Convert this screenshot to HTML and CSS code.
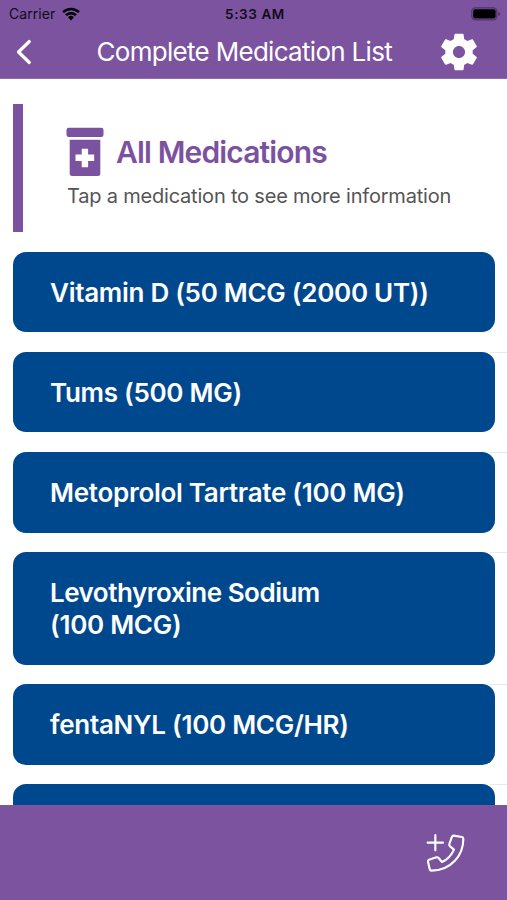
FILE: index.html
```html
<!DOCTYPE html>
<html lang="en">
<head>
<meta charset="utf-8">
<title>Complete Medication List</title>
<link rel="stylesheet" href="styles.css">
</head>
<body>
<div class="app">
  <header class="top">
    <div class="status">
      <div class="carrier"><span>Carrier</span>
        <svg class="wifi" viewBox="0 0 18 14"><path d="M0.2 4.3 A12.6 12.6 0 0 1 17.8 4.3 L16.1 6.1 A10.1 10.1 0 0 0 1.9 6.1Z M3.1 7.3 A8.4 8.4 0 0 1 14.9 7.3 L13.1 9.1 A5.9 5.9 0 0 0 4.9 9.1Z M6 10.3 A4.3 4.3 0 0 1 12 10.3 L9 13.5Z"/></svg>
      </div>
      <span class="time">5:33 AM</span>
      <svg class="battery" viewBox="0 0 30 14"><rect x=".8" y=".8" width="25" height="12" rx="3.6" fill="none" stroke="#4d3466" stroke-width="1.2"/><rect x="2.2" y="2.2" width="22.4" height="9.2" rx="2"/><path d="M27.3 5 Q29.3 5.5 29.3 6.9 Q29.3 8.3 27.3 8.8Z" fill="#4d3466"/></svg>
    </div>
    <div class="nav">
      <svg class="back" viewBox="0 0 16 26"><path d="M13.3 2.5 L2.5 13 L13.3 23.5"/></svg>
      <h1>Complete Medication List</h1>
      <svg class="gear" viewBox="0 0 24 24"><path d="M19.43 12.98c.04-.32.07-.64.07-.98s-.03-.66-.07-.98l2.11-1.65c.19-.15.24-.42.12-.64l-2-3.46c-.12-.22-.39-.3-.61-.22l-2.49 1c-.52-.4-1.08-.73-1.69-.98l-.38-2.65C14.46 2.18 14.25 2 14 2h-4c-.25 0-.46.18-.49.42l-.38 2.65c-.61.25-1.17.59-1.69.98l-2.49-1c-.23-.09-.49 0-.61.22l-2 3.46c-.13.22-.07.49.12.64l2.11 1.65c-.04.32-.07.65-.07.98s.03.66.07.98l-2.11 1.65c-.19.15-.24.42-.12.64l2 3.46c.12.22.39.3.61.22l2.49-1c.52.4 1.08.73 1.69.98l.38 2.65c.03.24.24.42.49.42h4c.25 0 .46-.18.49-.42l.38-2.65c.61-.25 1.17-.59 1.69-.98l2.49 1c.23.09.49 0 .61-.22l2-3.46c.12-.22.07-.49-.12-.64l-2.11-1.65zM12 15.3c-1.82 0-3.3-1.48-3.3-3.3s1.48-3.3 3.3-3.3 3.3 1.48 3.3 3.3-1.48 3.3-3.3 3.3z"/></svg>
    </div>
  </header>
  <main class="content">
    <section class="intro">
      <div class="heading">
        <svg class="bottle" viewBox="0 0 38 50"><rect x=".5" y=".7" width="37" height="9.3" rx="2.2"/><path fill-rule="evenodd" d="M3.7 12.7H34.3V46.5Q34.3 49 31.8 49H6.2Q3.7 49 3.7 46.5Z M15.7 21.8V27.5H9.5V33.9H15.7V40.2H22.1V33.9H28.2V27.5H22.1V21.8Z"/></svg>
        <h2>All Medications</h2>
      </div>
      <p>Tap a medication to see more information</p>
    </section>
    <ul class="list">
      <li><div class="card">Vitamin D (50 MCG (2000 UT))</div></li>
      <li><div class="card">Tums (500 MG)</div></li>
      <li><div class="card">Metoprolol Tartrate (100 MG)</div></li>
      <li><div class="card"><span class="name">Levothyroxine Sodium</span><br>(100 MCG)</div></li>
      <li><div class="card">fentaNYL (100 MCG/HR)</div></li>
      <li><div class="card"></div></li>
    </ul>
  </main>
  <footer class="bottom">
    <svg class="call" viewBox="76 154 126 126"><path d="M84 186H130 M107 163V209"/><path d="M162 165 L187 169 Q191 170 191 175 C191 225 153 270 96 270 Q91 270 90 265 L85 243 Q84 239 88 237 L110 230 Q114 229 117 232 L127 244 C143 237 155 225 163 207 L151 197 Q148 194 149 190 L157 168 Q159 164 162 165Z"/></svg>
  </footer>
</div>
</body>
</html>
```
FILE: styles.css
```css
* { box-sizing: border-box; }
body, h1, h2, p, ul { margin: 0; padding: 0; }
body { font-family: Inter, "Liberation Sans", sans-serif; background: #fff; }
svg { display: block; flex: none; }
.app { width: 507px; height: 900px; display: flex; flex-direction: column; overflow: hidden; }

.top { flex: none; height: 79px; background: #7c539f; border-bottom: 1px solid #8f6dae; }
.status { height: 27px; display: grid; grid-template-columns: 1fr auto 1fr; align-items: center; padding: 0 6px 0 9px; color: #110b17; }
.carrier { display: flex; align-items: center; gap: 7px; font-size: 14px; letter-spacing: .05px; }
.wifi { width: 18px; height: 14px; }
.time { font-size: 13.5px; font-weight: 600; letter-spacing: .6px; }
.battery { width: 30px; height: 14px; justify-self: end; }
.nav { height: 50px; display: flex; align-items: center; padding: 0 26px 0 16px; }
.back { width: 16px; height: 26px; fill: none; stroke: #fff; stroke-width: 3.2; stroke-linecap: round; stroke-linejoin: round; }
.nav h1 { flex: 1; padding-left: 64.5px; font-size: 26px; line-height: 32px; font-weight: 400; letter-spacing: -.7px; color: #fff; white-space: nowrap; }
.gear { width: 44px; height: 44px; fill: #fff; }

.content { flex: 1; min-height: 0; overflow: hidden; padding-top: 25px; }
.intro { height: 128px; margin-left: 13px; border-left: 10px solid #7b52a0; padding: 23px 0 0 43px; }
.heading { display: flex; align-items: center; gap: 12px; }
.bottle { width: 38px; height: 50px; fill: #7b52a0; }
.heading h2 { font-size: 30px; line-height: 36px; font-weight: 600; letter-spacing: -.85px; color: #7b52a0; white-space: nowrap; }
.intro p { padding-left: 1px; margin-top: 6px; font-size: 20px; line-height: 26px; letter-spacing: -.2px; color: #555; white-space: nowrap; }

.list { list-style: none; margin-top: 19.5px; }
.list li { padding: 0 12.5px 19.5px 13px; }
.list li + li { background: linear-gradient(#e9e9e9, #e9e9e9) right top / 17px 1px no-repeat; }
.card { min-height: 80.7px; padding: 25.2px 37px 23.5px; border-radius: 13px; background: #00488e; color: #fff; font-size: 26px; line-height: 32px; font-weight: 600; letter-spacing: -.28px; white-space: nowrap; }
.name { letter-spacing: -.5px; }

.bottom { flex: none; height: 95px; display: flex; align-items: center; justify-content: flex-end; padding-right: 40px; background: #7c539f; }
.call { width: 42px; height: 42px; fill: none; stroke: #fff; stroke-width: 6.5; stroke-linecap: round; stroke-linejoin: round; }
```
